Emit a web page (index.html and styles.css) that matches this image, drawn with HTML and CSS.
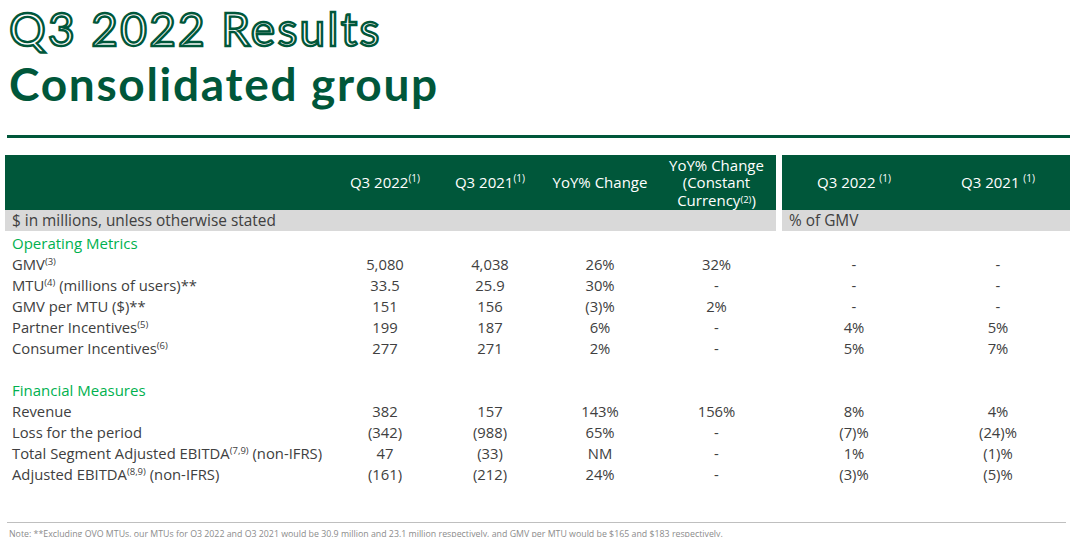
FILE: index.html
```html
<!DOCTYPE html>
<html lang="en">
<head>
<meta charset="utf-8">
<title>Q3 2022 Results</title>
<link rel="stylesheet" href="styles.css">
</head>
<body>
<div class="page">
  <header class="title">
    <h1 class="t1">Q3 2022 Results</h1>
    <h2 class="t2">Consolidated group</h2>
  </header>
  <div class="rule"></div>

  <div class="table">
    <div class="h"></div>
    <div class="h c"><span>Q3 2022<sup>(1)</sup></span></div>
    <div class="h c"><span>Q3 2021<sup>(1)</sup></span></div>
    <div class="h c"><span>YoY% Change</span></div>
    <div class="h c"><span class="stack">YoY% Change<br>(Constant<br>Currency<sup class="low">(2)</sup>)</span></div>
    <div class="gap"></div>
    <div class="h c"><span>Q3 2022 <sup>(1)</sup></span></div>
    <div class="h c"><span>Q3 2021 <sup>(1)</sup></span></div>

    <div class="band span5">$ in millions, unless otherwise stated</div>
    <div class="gap"></div>
    <div class="band span2">% of GMV</div>

    <div class="sect">Operating Metrics</div>

    <div class="l">GMV<sup>(3)</sup></div><div class="v">5,080</div><div class="v">4,038</div><div class="v">26%</div><div class="v">32%</div><div></div><div class="v">-</div><div class="v">-</div>
    <div class="l">MTU<sup>(4)</sup> (millions of users)**</div><div class="v">33.5</div><div class="v">25.9</div><div class="v">30%</div><div class="v">-</div><div></div><div class="v">-</div><div class="v">-</div>
    <div class="l">GMV per MTU ($)**</div><div class="v">151</div><div class="v">156</div><div class="v">(3)%</div><div class="v">2%</div><div></div><div class="v">-</div><div class="v">-</div>
    <div class="l">Partner Incentives<sup>(5)</sup></div><div class="v">199</div><div class="v">187</div><div class="v">6%</div><div class="v">-</div><div></div><div class="v">4%</div><div class="v">5%</div>
    <div class="l">Consumer Incentives<sup>(6)</sup></div><div class="v">277</div><div class="v">271</div><div class="v">2%</div><div class="v">-</div><div></div><div class="v">5%</div><div class="v">7%</div>

    <div class="blank"></div>

    <div class="sect">Financial Measures</div>

    <div class="l">Revenue</div><div class="v">382</div><div class="v">157</div><div class="v">143%</div><div class="v">156%</div><div></div><div class="v">8%</div><div class="v">4%</div>
    <div class="l">Loss for the period</div><div class="v">(342)</div><div class="v">(988)</div><div class="v">65%</div><div class="v">-</div><div></div><div class="v">(7)%</div><div class="v">(24)%</div>
    <div class="l">Total Segment Adjusted EBITDA<sup>(7,9)</sup> (non-IFRS)</div><div class="v">47</div><div class="v">(33)</div><div class="v">NM</div><div class="v">-</div><div></div><div class="v">1%</div><div class="v">(1)%</div>
    <div class="l">Adjusted EBITDA<sup>(8,9)</sup> (non-IFRS)</div><div class="v">(161)</div><div class="v">(212)</div><div class="v">24%</div><div class="v">-</div><div></div><div class="v">(3)%</div><div class="v">(5)%</div>
  </div>

  <footer class="note">
    <div class="note-rule"></div>
    <p class="note-text">Note: **Excluding OVO MTUs, our MTUs for Q3 2022 and Q3 2021 would be 30.9 million and 23.1 million respectively, and GMV per MTU would be $165 and $183 respectively.</p>
  </footer>
</div>
</body>
</html>
```

FILE: styles.css
```css
html, body {
  margin: 0;
  padding: 0;
  background: #ffffff;
}

body {
  font-family: "Open Sans", "Noto Sans", "Liberation Sans", sans-serif;
  color: #404040;
  overflow: hidden;
}

.page {
  width: 1078px;
  height: 537px;
  overflow: hidden;
}

.title {
  padding: 0 0 0 9px;
}

.t1,
.t2 {
  margin: 0;
  font-family: Lato, "Liberation Sans", sans-serif;
  font-size: 46px;
  line-height: 48px;
  color: #00573a;
}

.t1 {
  font-weight: 400;
  color: #ffffff;
  -webkit-text-stroke: 2.4px #00573a;
  padding-top: 5px;
  letter-spacing: 2.3px;
}

.t2 {
  font-weight: 700;
  margin-top: 7px;
  letter-spacing: 1.7px;
}

.rule {
  height: 3px;
  background: #00573a;
  margin: 27px 8px 0 7px;
}

.table {
  display: grid;
  grid-template-columns: 328px 104px 106px 114px 119px 6px 144px 144px;
  grid-template-rows: 55px 21px;
  grid-auto-rows: 21px;
  margin: 17px 0 0 5px;
  font-size: 14.8px;
}

.table sup {
  font-size: 9.5px;
  line-height: 0;
  vertical-align: 5px;
}

.h {
  background: #00573a;
  color: #ffffff;
  font-size: 15px;
  line-height: 17.5px;
}

.h sup {
  font-size: 10px;
  vertical-align: 6px;
}

.h .stack {
  line-height: 17.5px;
  padding-top: 1px;
}

.h sup.low {
  font-size: 9.5px;
  vertical-align: 3px;
}

.c {
  display: flex;
  align-items: center;
  justify-content: center;
  text-align: center;
}

.gap {
  background: #ffffff;
}

.band {
  background: #d9d9d9;
  color: #404040;
  font-size: 15.4px;
  line-height: 21px;
  padding-left: 7px;
  white-space: nowrap;
}

.span5 {
  grid-column: 1 / 6;
}

.span2 {
  grid-column: 7 / 9;
}

.sect {
  grid-column: 1 / -1;
  color: #00b14f;
  font-size: 15px;
  line-height: 21px;
  padding: 2px 0 0 7px;
}

.blank {
  grid-column: 1 / -1;
}

.l {
  padding: 2px 0 0 7px;
  line-height: 21px;
  white-space: nowrap;
}

.v {
  text-align: center;
  line-height: 21px;
  padding-top: 2px;
}

.note {
  padding: 0 12px 0 7px;
  margin-top: 39px;
}

.note-rule {
  height: 1px;
  background: #bfbfbf;
}

.note-text {
  margin: 6px 0 0 2px;
  font-size: 8.8px;
  line-height: 11px;
  color: #8c8c8c;
  white-space: nowrap;
}
```
